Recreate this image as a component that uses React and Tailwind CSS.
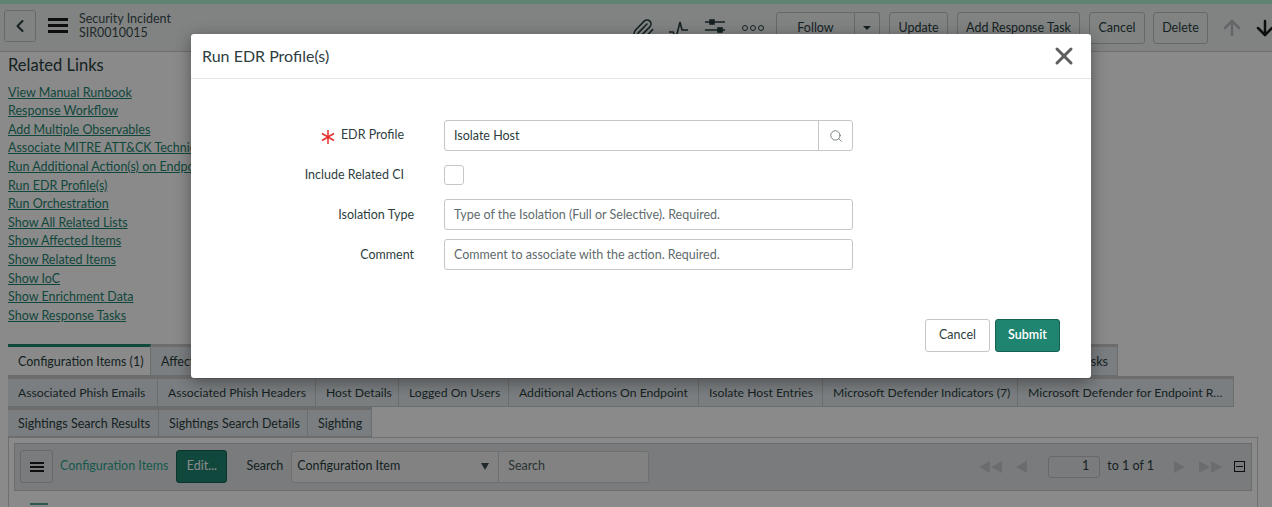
import { ArrowDown, ArrowUp, ChevronLeft, Paperclip, Search, X } from "lucide-react";

const links = [
  "View Manual Runbook",
  "Response Workflow",
  "Add Multiple Observables",
  "Associate MITRE ATT&CK Technique",
  "Run Additional Action(s) on Endpoint",
  "Run EDR Profile(s)",
  "Run Orchestration",
  "Show All Related Lists",
  "Show Affected Items",
  "Show Related Items",
  "Show IoC",
  "Show Enrichment Data",
  "Show Response Tasks",
];

function Tab({ label, className = "" }) {
  return (
    <div className={`h-full flex items-center pl-[10px] border-b border-b-[#c4cacc] border-r border-r-[#c4cacc] bg-[#e4e9ed] whitespace-nowrap overflow-hidden ${className}`}>
      {label}
    </div>
  );
}

function Btn({ children, className = "" }) {
  return (
    <button className={`h-[32px] flex items-center justify-center rounded-[3px] border border-[#bdc0c4] bg-[#eef2f2] ${className}`}>
      {children}
    </button>
  );
}

function Triangle({ dir, double }) {
  const points = dir === "left" ? "11,0 11,12 0,6" : "0,0 0,12 11,6";
  return (
    <svg width={double ? 23 : 11} height="12" viewBox={double ? "0 0 23 12" : "0 0 11 12"} fill="#c4c8cb">
      <polygon points={points} />
      {double && <polygon points={points} transform="translate(12 0)" />}
    </svg>
  );
}

function Field({ label, required, narrow, children }) {
  return (
    <div className="flex items-center">
      <div className={`w-[253px] flex items-center justify-end text-right text-[#2e3e40] ${narrow ? "pr-[40px]" : "pr-[30px] pt-[2px]"}`}>
        {required && (
          <svg width="14" height="14" viewBox="0 0 14 14" fill="none" stroke="#e3302c" strokeWidth="1.5" className="mr-[6px] mt-[3px]">
            <path d="M7 0v14M1 3.5l12 7M1 10.5l12-7" />
          </svg>
        )}
        {label}
      </div>
      {children}
    </div>
  );
}

export default function App() {
  return (
    <div className="relative h-[507px] w-[1272px] overflow-hidden bg-white font-[Lato,sans-serif] text-[12.5px] text-[#293e40]">
      <div className="h-[4px] bg-[#b0f2d5]" />
      <header className="h-[48px] flex items-start bg-[#eef2f2] border-b border-[#c9cdcf] pl-[4px]">
        <button className="mt-[6px] w-[32px] h-[32px] flex items-center justify-center rounded-[3px] border border-[#bdc0c4]">
          <ChevronLeft size={20} strokeWidth={2.5} />
        </button>
        <div className="ml-[12px] mt-[14px] w-[20px] flex flex-col gap-[3px]">
          <div className="h-[3px] bg-[#1b1b1b]" />
          <div className="h-[3px] bg-[#1b1b1b]" />
          <div className="h-[3px] bg-[#1b1b1b]" />
        </div>
        <div className="ml-[11px] mt-[8px] leading-[14px] text-[#3c4d4f]">
          <div>Security Incident</div>
          <div>SIR0010015</div>
        </div>
        <div className="ml-auto mt-[8px] flex items-center">
          <Paperclip size={24} strokeWidth={1.6} className="mr-[13px] mt-[4px] text-[#293e40]" />
          <svg width="22" height="22" viewBox="0 0 22 22" fill="none" stroke="#293e40" strokeWidth="1.6" className="mr-[15px] mt-[2px]">
            <path d="M1 14h4l3 6 4-16 2 8h6" />
          </svg>
          <svg width="20" height="22" viewBox="0 0 20 22" fill="none" stroke="#293e40" strokeWidth="1.6" className="mr-[17px] mt-[1px]">
            <path d="M0 4h20M0 12h20M0 20h20" />
            <rect x="5" y="2" width="4" height="4" fill="#293e40" />
            <rect x="13" y="10" width="4" height="4" fill="#293e40" />
            <rect x="5" y="18" width="4" height="4" fill="#293e40" />
          </svg>
          <div className="mr-[12px] flex gap-[2px]">
            <span className="w-[6px] h-[6px] rounded-full border border-[#293e40]" />
            <span className="w-[6px] h-[6px] rounded-full border border-[#293e40]" />
            <span className="w-[6px] h-[6px] rounded-full border border-[#293e40]" />
          </div>
          <Btn className="w-[79px] rounded-r-none">Follow</Btn>
          <Btn className="w-[25px] rounded-l-none border-l-0">
            <span className="border-x-[4px] border-x-transparent border-t-[4px] border-t-[#293e40]" />
          </Btn>
          <Btn className="ml-[9px] w-[59px]">Update</Btn>
          <Btn className="ml-[9px] w-[123px]">Add Response Task</Btn>
          <Btn className="ml-[9px] w-[56px]">Cancel</Btn>
          <Btn className="ml-[8px] w-[55px]">Delete</Btn>
          <ArrowUp size={24} strokeWidth={2.5} className="ml-[12px] text-[#b9bdbf]" />
          <ArrowDown size={24} strokeWidth={2.5} className="ml-[9px] mr-[-5px] text-[#1b1b1b]" />
        </div>
      </header>

      <main className="px-[8px]">
        <h2 className="pt-[1px] text-[16.5px] leading-[24px]">Related Links</h2>
        <ul className="mt-[6.6px]">
          {links.map((link) => (
            <li key={link} className="h-[18.6px] leading-[18.6px] text-[#1f8571] underline whitespace-nowrap">{link}</li>
          ))}
        </ul>

        <div className="mt-[18.4px]">
          <div className="h-[32px] w-[1110px] flex">
            <Tab label="Configuration Items (1)" className="w-[143px] pt-[3px] border-t-[3px] border-t-[#1f8571] bg-[#ffffff]" />
            <Tab label="Affected Services" className="flex-1 pt-[3px] border-t-[3px] border-t-[#c9c9c9]" />
            <Tab label="Response Tasks" className="pr-[9px] pt-[3px] border-t-[3px] border-t-[#c9c9c9]" />
          </div>
          <div className="h-[31px] w-[1226px] flex text-[12.2px]">
            <Tab label="Associated Phish Emails" className="w-[150px] pt-[2px] border-t-[3px] border-t-[#c9c9c9]" />
            <Tab label="Associated Phish Headers" className="w-[158px] pt-[2px] border-t-[3px] border-t-[#c9c9c9]" />
            <Tab label="Host Details" className="w-[83px] pt-[2px] border-t-[3px] border-t-[#c9c9c9]" />
            <Tab label="Logged On Users" className="w-[110px] pt-[2px] border-t-[3px] border-t-[#c9c9c9]" />
            <Tab label="Additional Actions On Endpoint" className="w-[190px] pt-[2px] border-t-[3px] border-t-[#c9c9c9]" />
            <Tab label="Isolate Host Entries" className="w-[124px] pt-[2px] border-t-[3px] border-t-[#c9c9c9]" />
            <Tab label="Microsoft Defender Indicators (7)" className="w-[195px] pt-[2px] border-t-[3px] border-t-[#c9c9c9]" />
            <Tab label="Microsoft Defender for Endpoint R…" className="w-[216px] pt-[2px] border-t-[3px] border-t-[#c9c9c9]" />
          </div>
          <div className="h-[30px] flex">
            <Tab label="Sightings Search Results" className="w-[151px] pt-[3px] border-t-[3px] border-t-[#c9c9c9]" />
            <Tab label="Sightings Search Details" className="w-[149px] pt-[3px] border-t-[3px] border-t-[#c9c9c9]" />
            <Tab label="Sighting" className="w-[64px] pt-[3px] border-t-[3px] border-t-[#c9c9c9]" />
          </div>
        </div>

        <section className="w-[1250px] h-[100px] border border-[#c9cdcf] p-[5px]">
          <div className="h-[48px] flex items-center border border-[#c4cacc] bg-[#e0e4e7] pl-[5px] pr-[6px]">
            <button className="w-[33px] h-[33px] flex flex-col items-center justify-center gap-[2px] rounded-[3px] border border-[#bdc0c4]">
              <span className="w-[14px] h-[2px] bg-[#1b1b1b]" />
              <span className="w-[14px] h-[2px] bg-[#1b1b1b]" />
              <span className="w-[14px] h-[2px] bg-[#1b1b1b]" />
            </button>
            <span className="ml-[7px] text-[#2ba58c]">Configuration Items</span>
            <button className="ml-[8px] w-[51px] h-[33px] rounded-[3px] border border-[#15604f] bg-[#1f8571] text-white">Edit...</button>
            <span className="ml-[19px]">Search</span>
            <div className="ml-[8px] w-[208px] h-[32px] flex items-center justify-between rounded-l-[3px] border border-[#c9cdcf] bg-[#f0f1f2] pl-[5px] pr-[9px]">
              Configuration Item
              <span className="border-x-[4px] border-x-transparent border-t-[7px] border-t-[#3c4d4f]" />
            </div>
            <div className="w-[150px] h-[32px] flex items-center rounded-r-[3px] border border-l-0 border-[#c9cdcf] bg-[#f0f1f2] pl-[9px] text-[#4f5f61]">Search</div>
            <div className="ml-auto flex items-center">
              <Triangle dir="left" double />
              <span className="ml-[14px]"><Triangle dir="left" /></span>
              <div className="ml-[21px] w-[52px] h-[22px] flex items-center justify-end rounded-[3px] border border-[#bdc0c4] pr-[10px]">1</div>
              <span className="ml-[7px]">to 1 of 1</span>
              <span className="ml-[20px]"><Triangle dir="right" /></span>
              <span className="ml-[14px]"><Triangle dir="right" double /></span>
              <span className="ml-[12px] w-[11px] h-[11px] flex items-center justify-center border border-[#1b1b1b]">
                <span className="w-[7px] h-px bg-[#1b1b1b]" />
              </span>
            </div>
          </div>
          <svg width="18" height="14" viewBox="0 0 18 14" fill="none" stroke="#1f8571" strokeWidth="1.5" className="ml-[16px] mt-[12px]">
            <path d="M0 1h18M2 5h14M4 9h10" />
          </svg>
        </section>
      </main>

      <div className="absolute inset-0 bg-black/46" />

      <div className="absolute left-[191px] top-[34px] w-[900px] h-[344px] rounded-[3px] bg-white shadow-[0_4px_16px_rgba(0,0,0,0.4)]">
        <div className="h-[45px] flex items-center justify-between border-b border-[#e3e3e3] pl-[11px] pr-[13px]">
          <h1 className="text-[16px] text-[#2e3e40]">Run EDR Profile(s)</h1>
          <X size={28} strokeWidth={2.6} className="text-[#5f5f5f]" />
        </div>
        <div className="pt-[41px] flex flex-col gap-[9px]">
          <Field label="EDR Profile" required narrow>
            <div className="w-[409px] h-[31px] flex rounded-[3px] border border-[#c4c7c9]">
              <div className="flex-1 flex items-center pl-[9px] pt-[1px] text-[#2e3e40]">Isolate Host</div>
              <div className="w-[34px] flex items-center justify-center border-l border-[#c4c7c9]">
                <Search size={14} strokeWidth={1.4} className="text-[#5f6b6d]" />
              </div>
            </div>
          </Field>
          <Field label="Include Related CI" narrow>
            <div className="h-[30px] flex items-center">
              <div className="w-[20px] h-[20px] rounded-[3px] border border-[#c4c7c9]" />
            </div>
          </Field>
          <Field label="Isolation Type">
            <div className="w-[409px] h-[31px] flex items-center rounded-[3px] border border-[#c4c7c9] pl-[9px] pt-[2px] text-[#5f6b6d]">Type of the Isolation (Full or Selective). Required.</div>
          </Field>
          <Field label="Comment">
            <div className="w-[409px] h-[31px] flex items-center rounded-[3px] border border-[#c4c7c9] pl-[9px] pt-[2px] text-[#5f6b6d]">Comment to associate with the action. Required.</div>
          </Field>
        </div>
        <div className="mt-[49px] flex justify-end gap-[5px] pr-[31px]">
          <button className="w-[65px] h-[33px] rounded-[3px] border border-[#c4c7c9] text-[#2e3e40]">Cancel</button>
          <button className="w-[65px] h-[33px] rounded-[3px] border border-[#15604f] bg-[#1f8571] font-semibold text-white">Submit</button>
        </div>
      </div>
    </div>
  );
}
